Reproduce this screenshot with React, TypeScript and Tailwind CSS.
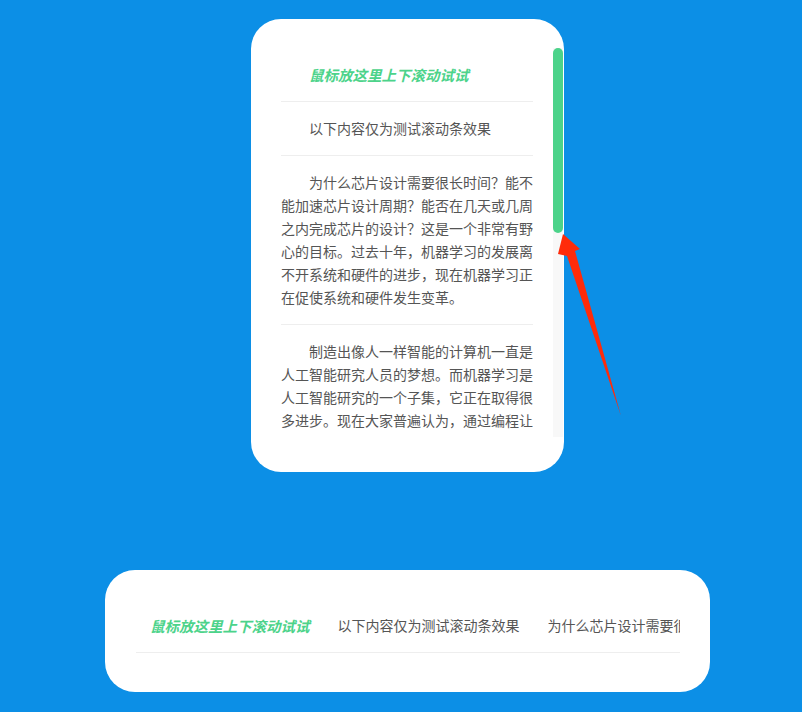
import React from 'react';

const font = { fontFamily: '"Microsoft YaHei", "Noto Sans CJK SC", "Noto Sans", sans-serif' };

const title = '鼠标放这里上下滚动试试';
const intro = '以下内容仅为测试滚动条效果';
const para1 =
  '为什么芯片设计需要很长时间？能不能加速芯片设计周期？能否在几天或几周之内完成芯片的设计？这是一个非常有野心的目标。过去十年，机器学习的发展离不开系统和硬件的进步，现在机器学习正在促使系统和硬件发生变革。';
const para2 =
  '制造出像人一样智能的计算机一直是人工智能研究人员的梦想。而机器学习是人工智能研究的一个子集，它正在取得很多进步。现在大家普遍认为，通过编程让计算机自己学习，而不是一步一步地告诉它该怎么做，是实现这个目标的最好方法。';

function VerticalCard() {
  return (
    <div className="w-[313px] h-[453px] bg-white rounded-[30px] pl-[30px] pr-px pt-[29px] pb-[35px]">
      <div className="flex h-[389px]">
        {/* content column */}
        <div className="w-[252px] h-full overflow-hidden text-[14px] text-[#555] leading-[23px]">
          <div className="py-[15px] indent-[28px] border-b border-[#eee] text-[14.5px] font-bold italic text-[#4cd38a]">
            {title}
          </div>
          <div className="py-[15px] indent-[2em] border-b border-[#eee]">{intro}</div>
          <p className="py-[15px] indent-[2em] border-b border-[#eee] text-justify">{para1}</p>
          <p className="py-[15px] indent-[2em] border-b border-[#eee] text-justify">{para2}</p>
        </div>
        {/* fake scrollbar */}
        <div className="ml-[20px] w-[10px] h-full bg-[#f8f8f8]">
          <div className="h-[185px] w-full rounded-full bg-[#4cd38a]" />
        </div>
      </div>
    </div>
  );
}

function HorizontalCard() {
  return (
    <div className="w-[605px] h-[122px] bg-white rounded-[30px] pl-[31px] pr-[30px] pt-[29px]">
      <div className="flex whitespace-nowrap overflow-hidden border-b border-[#eee] text-[14px] text-[#555] leading-[23px]">
        <div className="shrink-0 py-[15px] px-[14px] text-[14.5px] font-bold italic text-[#4cd38a]">{title}</div>
        <div className="shrink-0 py-[15px] px-[14px]">{intro}</div>
        <div className="shrink-0 py-[15px] px-[14px]">{para1}</div>
      </div>
    </div>
  );
}

export default function App() {
  return (
    <div className="relative w-full h-[712px] overflow-hidden bg-[#0c8fe6] pl-[13px]" style={font}>
      <div className="flex flex-col items-center pt-[19px] gap-[98px]">
        <VerticalCard />
        <HorizontalCard />
      </div>

      {/* red pointer arrow */}
      <svg className="absolute left-0 top-0 pointer-events-none" width="802" height="712" viewBox="0 0 802 712">
        <polygon
          points="563,234 580,249 575,251 621,416 567,256 558,254"
          fill="#ff2b0a"
        />
      </svg>
    </div>
  );
}
